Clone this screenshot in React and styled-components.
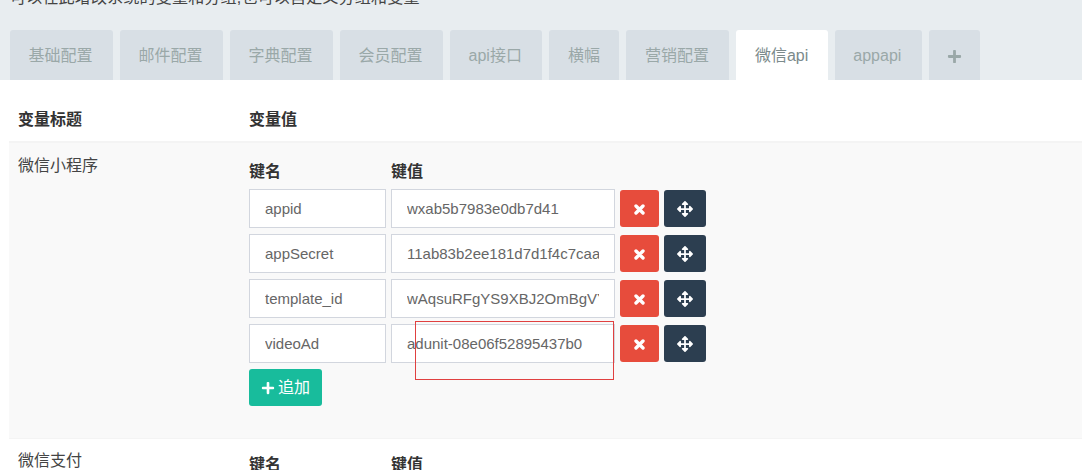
import React from 'react'
import styled, { createGlobalStyle } from 'styled-components'
import { FaPlus, FaArrowsAlt } from 'react-icons/fa'

const Global = createGlobalStyle`
   html, body {
      margin: 0;
      height: 470px;
      overflow: hidden;
      background: #fff;
      font-family: "Liberation Sans", "Noto Sans CJK SC", sans-serif;
      font-size: 15px;
      color: #444;
   }
`

const Head = styled.div`
   height: 80px;
   background: #e8edf0;
   padding-left: 10px;
   overflow: hidden;
`

const Tip = styled.div`
   margin-top: -13px;
   height: 43px;
   line-height: 22px;
   font-size: 16px;
   letter-spacing: 0.2px;
   color: #444;
`

const Tabs = styled.div`
   display: flex;
   gap: 7px;
   height: 50px;
`

const Tab = styled.div`
   display: flex;
   align-items: center;
   padding: 2px ${p => p.$right ?? 20.5}px 0 18.5px;
   box-sizing: border-box;
   font-size: 16px;
   line-height: 22px;
   border-radius: 3px 3px 0 0;
   color: ${p => (p.$active ? '#7b8a8b' : '#9aa8a8')};
   background: ${p => (p.$active ? '#fff' : '#d8dfe5')};
`

const TitleRow = styled.div`
   display: flex;
   height: 61px;
   margin-left: 9px;
   align-items: center;
   padding-top: 14px;
   box-sizing: border-box;
   font-size: 16px;
   font-weight: 700;
   color: #333;
`

const TitleCell = styled.div`
   width: 240px;
   padding-left: 9px;
   box-sizing: border-box;
`

const VarRow = styled.div`
   display: flex;
   margin-left: 9px;
   height: ${p => p.$height}px;
   box-sizing: border-box;
   border-top: ${p => (p.$striped ? 2 : 1)}px solid #f4f4f4;
   background: ${p => (p.$striped ? '#f9f9f9' : '#fff')};
`

const VarName = styled.div`
   width: 240px;
   padding: ${p => p.$top}px 0 0 9px;
   box-sizing: border-box;
   font-size: 16px;
   line-height: 22px;
   color: #444;
`

const VarBody = styled.div`
   display: flex;
   flex-direction: column;
   gap: 6px;
   padding-top: ${p => p.$top}px;
`

const Labels = styled.div`
   display: flex;
   gap: 5px;
   height: 22px;
   line-height: 22px;
   font-size: 16px;
   font-weight: 700;
   color: #333;
`

const Label = styled.div`
   width: ${p => p.$width}px;
`

const Line = styled.div`
   position: relative;
   display: flex;
   align-items: center;
   gap: 5px;
`

const Field = styled.input`
   width: ${p => p.$width}px;
   height: 39px;
   padding: 0 15px;
   box-sizing: border-box;
   border: 1px solid #d2d6de;
   border-radius: 0;
   outline: 0;
   background: #fff;
   font-family: inherit;
   font-size: 15px;
   color: #666;
`

const IconButton = styled.button`
   display: flex;
   align-items: center;
   justify-content: center;
   width: ${p => p.$width}px;
   height: 37px;
   padding: 1px 0 0;
   box-sizing: border-box;
   border: 0;
   border-radius: 3px;
   color: #fff;
   background: ${p => p.$color};
   font-size: 16px;
`

const AddButton = styled.button`
   display: flex;
   align-items: center;
   justify-content: center;
   gap: 3px;
   width: 73px;
   height: 37px;
   padding: 0;
   border: 0;
   border-radius: 3px;
   color: #fff;
   background: #18bc9c;
   font-family: inherit;
   font-size: 16px;
   line-height: 22px;
`

const Marker = styled.div`
   position: absolute;
   left: 166px;
   top: -3px;
   width: 199px;
   height: 59px;
   box-sizing: border-box;
   border: 1px solid #e04040;
   pointer-events: none;
`

// the thin FaTimes doesn't match, this one is heavier
const TimesIcon = () => (
   <svg width="11" height="11" viewBox="0 0 11 11">
      <path d="M2 2L9 9M9 2L2 9" stroke="currentColor" strokeWidth="3.4" strokeLinecap="round" />
   </svg>
)

const tabs = [
   { name: '基础配置' },
   { name: '邮件配置' },
   { name: '字典配置' },
   { name: '会员配置' },
   { name: 'api接口' },
   { name: '横幅', right: 19.5 },
   { name: '营销配置' },
   { name: '微信api', right: 19.5, active: true },
   { name: 'appapi' },
]

const fields = [
   ['appid', 'wxab5b7983e0db7d41'],
   ['appSecret', '11ab83b2ee181d7d1f4c7caa5e3c'],
   ['template_id', 'wAqsuRFgYS9XBJ2OmBgVYk3dTz'],
   ['videoAd', 'adunit-08e06f52895437b0'],
]

const App = () => {
   return (
      <>
         <Global />
         <Head>
            <Tip>可以在此增改系统的变量和分组,也可以自定义分组和变量</Tip>
            <Tabs>
               {tabs.map(t => (
                  <Tab key={t.name} $active={t.active} $right={t.right}>{t.name}</Tab>
               ))}
               <Tab $right={18}><FaPlus size={15} /></Tab>
            </Tabs>
         </Head>
         <TitleRow>
            <TitleCell>变量标题</TitleCell>
            <div>变量值</div>
         </TitleRow>
         <VarRow $striped $height={297}>
            <VarName $top={12}>微信小程序</VarName>
            <VarBody $top={18}>
               <Labels>
                  <Label $width={137}>键名</Label>
                  <Label $width={224}>键值</Label>
               </Labels>
               {fields.map(([k, v], i) => (
                  <Line key={k}>
                     <Field $width={137} readOnly defaultValue={k} />
                     <Field $width={224} readOnly defaultValue={v} />
                     <IconButton $width={39} $color="#e74c3c"><TimesIcon /></IconButton>
                     <IconButton $width={42} $color="#2c3e50"><FaArrowsAlt /></IconButton>
                     {i === 3 && <Marker />}
                  </Line>
               ))}
               <AddButton><FaPlus size={14} />追加</AddButton>
            </VarBody>
         </VarRow>
         <VarRow $height={32}>
            <VarName $top={11}>微信支付</VarName>
            <VarBody $top={15}>
               <Labels>
                  <Label $width={137}>键名</Label>
                  <Label $width={224}>键值</Label>
               </Labels>
            </VarBody>
         </VarRow>
      </>
   )
}

export default App
